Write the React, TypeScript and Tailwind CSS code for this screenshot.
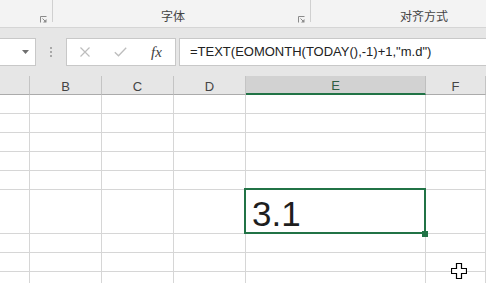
import React from "react";

const Launcher = () => (
  <svg width="7" height="7" viewBox="0 0 7 7" className="block">
    <path d="M0.5 6.5V0.5H6.5" fill="none" stroke="#8a8a8a" strokeWidth="1" />
    <path d="M2.5 2.5L5.5 5.5" fill="none" stroke="#8a8a8a" strokeWidth="1" />
    <path d="M3 6.5H6.5V3Z" fill="#8a8a8a" />
  </svg>
);

const rows = [19, 19, 19, 19, 19, 44, 19, 19, 19];
const cols = ["", "B", "C", "D", "E", "F"];

export default function App() {
  return (
    <div className="relative w-[486px] h-[283px] overflow-hidden bg-[#e6e6e6] font-['Liberation_Sans',sans-serif]">
      {/* Ribbon */}
      <div className="flex h-[28px] bg-[#f3f3f3] border-b border-[#d5d5d5] font-['Noto_Sans_CJK_SC',sans-serif] text-[12px] leading-[14px] text-[#444]">
        <div className="w-[52px] h-full flex items-start justify-end pt-[16px] pr-[5px]">
          <Launcher />
        </div>
        <div className="w-px h-[22px] bg-[#d0d0d0]" />
        <div className="w-[257px] h-full flex items-start pt-[9px] pl-[108px] pr-[5px]">
          <span>字体</span>
          <div className="ml-auto mt-[7px]">
            <Launcher />
          </div>
        </div>
        <div className="w-px h-[22px] bg-[#d0d0d0]" />
        <div className="flex-1 h-full flex items-start pt-[9px] pl-[89px]">
          <span>对齐方式</span>
        </div>
      </div>

      {/* band */}
      <div className="h-[10px]" />

      {/* Formula bar */}
      <div className="flex h-[28px]">
        <div className="w-[36px] h-full bg-white border border-l-0 border-[#c8c8c8] flex items-center justify-end pr-[6px]">
          <svg width="7" height="4" viewBox="0 0 7 4" className="block">
            <path d="M0 0H7L3.5 4Z" fill="#6f6f6f" />
          </svg>
        </div>
        <div className="w-[30px] h-full flex flex-col items-center justify-center gap-[2px]">
          <div className="w-[2px] h-[2px] bg-[#a8a8a8]" />
          <div className="w-[2px] h-[2px] bg-[#a8a8a8]" />
          <div className="w-[2px] h-[2px] bg-[#a8a8a8]" />
        </div>
        <div className="w-[110px] h-full bg-white border border-[#c8c8c8] flex items-center pl-[13px]">
          <svg width="10" height="10" viewBox="0 0 10 10" className="block">
            <path d="M0.5 0.5L9.5 9.5M9.5 0.5L0.5 9.5" stroke="#bdbdbd" strokeWidth="1.2" fill="none" />
          </svg>
          <svg width="13" height="10" viewBox="0 0 13 10" className="block ml-[24px]">
            <path d="M0.8 5.2L4.5 8.8L12.2 0.8" stroke="#bdbdbd" strokeWidth="1.3" fill="none" />
          </svg>
          <span className="ml-[24px] font-['Liberation_Serif',serif] italic text-[15px] leading-[16px] text-[#404040]">
            fx
          </span>
        </div>
        <div className="w-[3px]" />
        <div className="flex-1 h-full bg-white border border-r-0 border-[#c8c8c8] flex items-center pl-[10px] text-[13px] text-[#222] whitespace-nowrap">
          =TEXT(EOMONTH(TODAY(),-1)+1,"m.d")
        </div>
      </div>

      {/* band */}
      <div className="h-[10px]" />

      {/* Grid */}
      <div className="grid grid-cols-[30px_72px_72px_72px_180px_1fr]">
        {cols.map((c, i) =>
          c === "E" ? (
            <div
              key={"h" + i}
              className="h-[19px] bg-[#d2d2d2] border-r border-[#bfbfbf] border-b-2 border-b-[#217346] flex items-center justify-center pt-[3px] text-[13px] text-[#2f5f43]"
            >
              {c}
            </div>
          ) : (
            <div
              key={"h" + i}
              className="h-[19px] bg-[#e6e6e6] border-r border-b border-r-[#c4c4c4] border-b-[#ababab] flex items-center justify-center pt-[3px] text-[13px] text-[#444]"
            >
              {c}
            </div>
          )
        )}
        {rows.map((h, r) =>
          cols.map((c, i) => {
            const sel = r === 5 && c === "E";
            return (
              <div
                key={r + "-" + i}
                style={{ height: h }}
                className={
                  sel
                    ? "relative z-10 bg-white border-r border-b border-[#d6d6d6]"
                    : "relative bg-white border-r border-b border-[#d6d6d6]"
                }
              >
                {sel && (
                  <>
                    <div className="absolute -left-[2px] -top-[2px] -right-[1px] -bottom-[1px] border-2 border-[#217346]" />
                    <div className="absolute left-[176px] top-[41px] w-[6px] h-[6px] bg-[#217346]" />
                    <div className="pl-[6px] pt-[4px] text-[35px] leading-[40px] text-[#1e1e1e]">3.1</div>
                  </>
                )}
              </div>
            );
          })
        )}
      </div>

      {/* cursor */}
      <svg
        width="16"
        height="16"
        viewBox="0 0 16 16"
        className="absolute left-[451px] top-[263px] z-20"
      >
        <path
          d="M5.5 0.5H10.5V5.5H15.5V10.5H10.5V15.5H5.5V10.5H0.5V5.5H5.5Z"
          fill="#fff"
          stroke="#000"
          strokeWidth="1.2"
        />
      </svg>
    </div>
  );
}
